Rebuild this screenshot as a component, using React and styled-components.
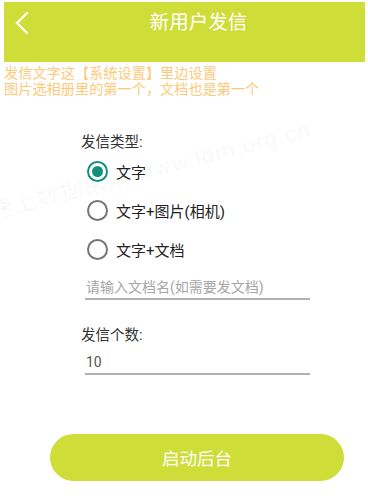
import React, { useState } from "react";
import styled, { createGlobalStyle } from "styled-components";

const GlobalStyle = createGlobalStyle`
  body {
    margin: 0;
    background: #ffffff;
    font-family: Roboto, "Noto Sans CJK SC", sans-serif;
  }
`;

const Page = styled.div`
  position: relative;
  width: 368px;
  height: 501px;
  overflow: hidden;
  background: #fff;
`;

const Header = styled.header`
  display: flex;
  align-items: flex-start;
  height: 60px;
  margin: 2px 3px 0 4px;
  background: #cfdd38;
  color: #fff;
`;

const Back = styled.button`
  width: 28px;
  height: 42px;
  margin: 0;
  padding: 0 0 0 11px;
  display: flex;
  align-items: center;
  border: none;
  background: transparent;
  color: #fff;
`;

const Title = styled.h1`
  flex: 1;
  margin: 0;
  height: 42px;
  line-height: 42px;
  text-align: center;
  font-size: 19.5px;
  font-weight: 400;
`;

const Hint = styled.p`
  margin: 3px 0 0 4px;
  font-size: 14.2px;
  line-height: 16px;
  color: #ffc97a;
`;

const Form = styled.div`
  display: flex;
  flex-direction: column;
  padding: 37px 0 0 81px;
  width: 228px;
`;

const Label = styled.div`
  font-size: 14.5px;
  line-height: 18px;
  color: #333;
  margin-top: ${(p) => p.$top || 0}px;
`;

const RadioRow = styled.label`
  display: flex;
  align-items: center;
  gap: 8px;
  height: 39.2px;
  padding-left: 6px;
  font-size: 15px;
  color: #222;
`;

const Circle = styled.span`
  box-sizing: border-box;
  width: 21px;
  height: 21px;
  border-radius: 50%;
  border: 2px solid ${(p) => (p.$on ? "#12907a" : "#757575")};
  display: flex;
  align-items: center;
  justify-content: center;

  &::after {
    content: "";
    width: 11px;
    height: 11px;
    border-radius: 50%;
    background: ${(p) => (p.$on ? "#12907a" : "transparent")};
  }
`;

const Field = styled.input`
  box-sizing: border-box;
  width: 225px;
  margin-left: 4px;
  height: 30px;
  padding: 6px 0 0 1px;
  border: none;
  border-bottom: 2px solid #b0b0b0;
  outline: none;
  font-family: Roboto, "Noto Sans CJK SC", sans-serif;
  font-size: 14px;
  color: #555;
  background: transparent;

  &::placeholder {
    color: #a6a6a6;
  }
`;

const StartButton = styled.button`
  display: block;
  width: 294px;
  height: 47px;
  margin: 59px 0 0 50px;
  border: none;
  border-radius: 24px;
  background: #cfdd38;
  color: #fff;
  font-family: Roboto, "Noto Sans CJK SC", sans-serif;
  font-size: 17.5px;
`;

const Watermark = styled.div`
  position: absolute;
  left: -6px;
  top: 192px;
  white-space: nowrap;
  font-size: 23px;
  letter-spacing: 1px;
  color: rgba(0, 0, 0, 0.035);
  transform: rotate(-14.5deg);
  transform-origin: left bottom;
  pointer-events: none;
`;

const options = ["文字", "文字+图片(相机)", "文字+文档"];

export default function App() {
  const [type, setType] = useState(0);

  return (
    <Page>
      <GlobalStyle />
      <Header>
        <Back>
          <svg width="14" height="22" viewBox="0 0 14 22">
            <path
              d="M12 1 L2 11 L12 21"
              fill="none"
              stroke="#fff"
              strokeWidth="2.2"
              strokeLinecap="round"
            />
          </svg>
        </Back>
        <Title>新用户发信</Title>
      </Header>
      <Hint>
        发信文字这【系统设置】里边设置
        <br />
        图片选相册里的第一个，文档也是第一个
      </Hint>
      <Form>
        <Label>发信类型:</Label>
        {options.map((o, i) => (
          <RadioRow key={o} onClick={() => setType(i)}>
            <Circle $on={type === i} />
            {o}
          </RadioRow>
        ))}
        <Field placeholder="请输入文档名(如需要发文档)" />
        <Label $top={27}>发信个数:</Label>
        <Field defaultValue="10" />
      </Form>
      <StartButton>启动后台</StartButton>
      <Watermark>速上数据采集 www.ldm.org.cn</Watermark>
    </Page>
  );
}
